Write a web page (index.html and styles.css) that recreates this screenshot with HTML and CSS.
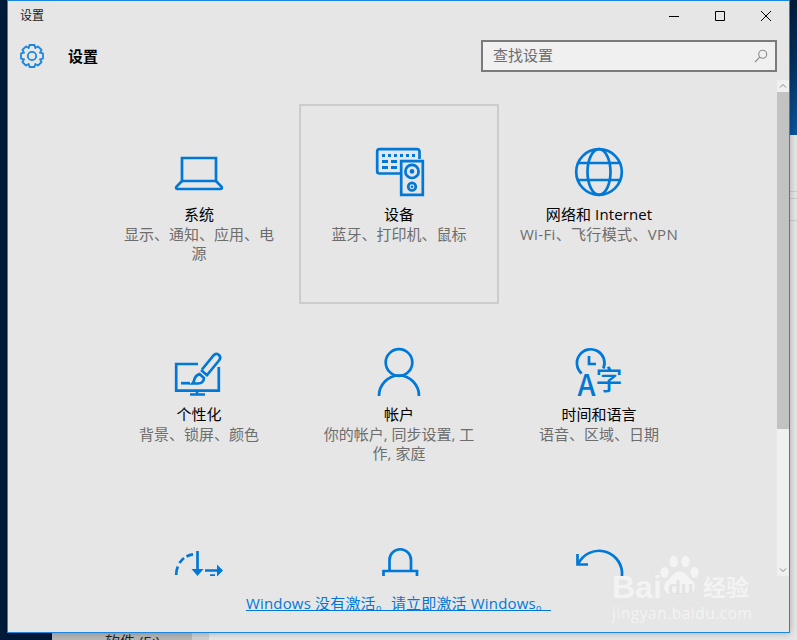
FILE: index.html
```html
<!DOCTYPE html>
<html lang="zh-CN">
<head>
<meta charset="utf-8">
<title>设置</title>
<link rel="stylesheet" href="styles.css">
</head>
<body>
<div class="desktop">
  <div class="edge-left"></div>
  <main class="window">
    <div class="titlebar">
      <span class="title">设置</span>
      <div class="controls">
        <svg class="ctl" viewBox="0 0 46 30"><path d="M18 15.5H28"/></svg>
        <svg class="ctl" viewBox="0 0 46 30"><path d="M18.5 10.5H27.5V19.5H18.5Z"/></svg>
        <svg class="ctl" viewBox="0 0 46 30"><path d="M18 10L28 20M28 10L18 20"/></svg>
      </div>
    </div>
    <header class="head">
      <div class="head-left">
        <svg class="gear" viewBox="0 0 24 24"><path d="M14.54 1L15.29 4.05L17.99 2.42L21.58 6.01L19.95 8.71L23 9.46V14.54L19.95 15.29L21.58 17.99L17.99 21.58L15.29 19.95L14.54 23H9.46L8.71 19.95L6.01 21.58L2.42 17.99L4.05 15.29L1 14.54V9.46L4.05 8.71L2.42 6.01L6.01 2.42L8.71 4.05L9.46 1Z"/><circle cx="12" cy="12" r="4.2"/></svg>
        <h1 class="head-title">设置</h1>
      </div>
      <div class="search">
        <span class="search-text">查找设置</span>
        <svg class="search-icon" viewBox="0 0 14 14"><circle cx="8.7" cy="5.3" r="4"/><path d="M5.8 8.2L1 13"/></svg>
      </div>
    </header>
    <div class="body">
      <div class="scroller">
        <div class="grid">
          <div class="cell">
            <svg class="ico" viewBox="0 0 48 48"><path d="M7 10H41V33H7Z"/><path d="M7 33L1.6 38.5Q0 41 3 41H45Q48 41 46.4 38.5L41 33"/></svg>
            <div class="name">系统</div>
            <div class="desc">显示、通知、应用、电源</div>
          </div>
          <div class="cell cell-on">
            <svg class="ico" viewBox="-1 0 48 48"><path d="M43.5 11V3.5Q43.5 1.2 41 1.2H3.5Q1.2 1.2 1.2 3.5V23Q1.2 25.5 3.5 25.5H24"/><path d="M25.2 13.2H46.8V46.8H25.2Z"/><circle cx="36" cy="23.4" r="6.6"/><circle cx="36" cy="38.7" r="3.8"/><path class="solid" d="M6 6h3v3h-3zM12 6h3v3h-3zM18 6h3v3h-3zM24 6h3v3h-3zM30 6h3v3h-3zM36 6h3v3h-3zM6 12h6v3h-6zM15 12h6v3h-6zM6 18h6v3h-6zM15 18h6v3h-6z"/><circle class="solid" cx="36" cy="23.4" r="2.3"/><circle class="solid" cx="36" cy="38.7" r="1.3"/></svg>
            <div class="name">设备</div>
            <div class="desc">蓝牙、打印机、鼠标</div>
          </div>
          <div class="cell">
            <svg class="ico" viewBox="0 0 48 48"><circle cx="24" cy="24" r="22.8"/><ellipse cx="24" cy="24" rx="11.5" ry="22.8"/><path d="M3 15H45M3 32H45"/></svg>
            <div class="name name-latin">网络和 Internet</div>
            <div class="desc desc-latin">Wi-Fi、飞行模式、VPN</div>
          </div>
          <div class="cell">
            <svg class="ico" viewBox="0 0 48 48"><path d="M23 16H1.2V42.7H43.8V19"/><path d="M22 43V46.5M15 46.5H30"/><path d="M6 35.2H15"/><path d="M27 21.5L38.5 7.5Q41.5 4.5 44 7Q46.5 9.5 44 12.5L32.5 26.5"/><path d="M26 22L33 28"/><path d="M24.5 26L29 30Q28.5 35.5 23 35.5H17.5Q19 34 19.5 31Q20.5 27.5 24.5 26Z"/></svg>
            <div class="name">个性化</div>
            <div class="desc">背景、锁屏、颜色</div>
          </div>
          <div class="cell">
            <svg class="ico" viewBox="0 0 48 48"><circle cx="24" cy="14.5" r="13.3"/><path d="M4 48A20 20.5 0 0 1 44 48"/></svg>
            <div class="name">帐户</div>
            <div class="desc">你的帐户, 同步设置, 工作, 家庭</div>
          </div>
          <div class="cell">
            <svg class="ico" viewBox="0 0 48 48"><path d="M6.7 25.5A13.8 13.8 0 1 1 28.4 20.5"/><path d="M14 8V16H21"/><text class="ico-a" x="2.5" y="48">A</text><text class="ico-zi" x="20.5" y="41.5">字</text></svg>
            <div class="name">时间和语言</div>
            <div class="desc">语音、区域、日期</div>
          </div>
          <div class="cell">
            <svg class="ico" viewBox="0 0 48 48"><path d="M1.2 27A20 20 0 0 1 2.8 18.5M4.5 15A20 20 0 0 1 9 10M11.5 8.5A20 20 0 0 1 18 6.3"/><path d="M22.5 3V24"/><path class="solid" d="M16.5 21H28.5L22.5 28Z"/><path d="M30 22.5H43M35 27.5H40"/><path class="solid" d="M42 16.5L48 22.5L42 28.5Z"/></svg>
          </div>
          <div class="cell">
            <svg class="ico" viewBox="0 0 48 48"><path d="M14.5 23V12A10.7 10.7 0 0 1 36 12V23"/><path d="M8.5 30V23H42V30"/></svg>
          </div>
          <div class="cell">
            <svg class="ico" viewBox="0 0 48 48"><path d="M2.5 6V16.5H13"/><path d="M3.5 15.5A23 23 0 0 1 47 24V32"/></svg>
          </div>
        </div>
      </div>
      <div class="scrollbar">
        <svg class="arrow" viewBox="0 0 12 12"><path d="M3 7.5L6 4.5L9 7.5"/></svg>
        <div class="track"><div class="thumb"></div></div>
        <svg class="arrow" viewBox="0 0 12 12"><path d="M3 4.5L6 7.5L9 4.5"/></svg>
      </div>
    </div>
    <footer class="foot"><a class="link" href="#">Windows 没有激活。请立即激活 Windows。</a></footer>
    <div class="mark">
      <span class="mark-bai">Bai</span>
      <svg class="mark-paw" viewBox="0 0 44 46"><ellipse cx="15" cy="7" rx="4.5" ry="6.5"/><ellipse cx="28" cy="7" rx="4.5" ry="6.5"/><ellipse cx="5" cy="19" rx="4.5" ry="6"/><ellipse cx="38" cy="19" rx="4.5" ry="6"/><path d="M21.5 18C28 18 30 24 35 28C41 33 38 44 30 43C26 42.5 24 41.5 21.5 41.5C18 41.5 16 43 12 43C4 43 2 33 8 28C13 24 15 18 21.5 18Z"/></svg>
      <span class="mark-du">du</span>
      <span class="mark-cn">经验</span>
      <span class="mark-url">jingyan.baidu.com</span>
    </div>
  </main>
  <div class="edge-right"></div>
  <div class="under"><span class="under-text">软件 (E:)</span></div>
</div>
</body>
</html>
```

FILE: styles.css
```css
* { box-sizing: border-box; }
html, body { margin: 0; height: 640px; overflow: hidden; }
body { font-family: "Open Sans", "Noto Sans CJK SC", "Liberation Sans", sans-serif; }
.desktop {
  position: relative;
  width: 797px;
  height: 640px;
  display: flex;
  align-items: flex-start;
  background: linear-gradient(90deg, #00193a 52px, #e6e6e6 52px);
  overflow: hidden;
}
.edge-left { width: 7px; height: 633px; background: #001b3a; flex: none; }
.edge-right {
  width: 7px;
  height: 640px;
  flex: none;
  background: linear-gradient(#001c3d 0, #03305e 60px, #0a55a0 135px, #e6e6e6 135px, #e6e6e6 191px, #cfcfcf 191px, #cfcfcf 192px, #e6e6e6 192px, #e6e6e6 198px, #cfcfcf 198px, #cfcfcf 199px, #e6e6e6 199px, #e6e6e6 220px, #cfcfcf 220px, #cfcfcf 221px, #e6e6e6 221px);
}
.window {
  position: relative;
  z-index: 1;
  width: 783px;
  height: 633px;
  flex: none;
  display: flex;
  flex-direction: column;
  background: #e6e6e6;
  border: 1px solid #1b86dd;
  box-shadow: 0 0 7px rgba(0,0,0,.28);
  color: #000;
}
.titlebar { height: 30px; flex: none; display: flex; justify-content: space-between; align-items: center; }
.title { margin: -2px 0 0 12px; font-size: 12px; color: #1a1a1a; }
.controls { display: flex; }
.ctl { width: 46px; height: 30px; display: block; fill: none; stroke: #000; stroke-width: 1; }
.head { height: 49px; flex: none; display: flex; justify-content: space-between; align-items: flex-start; padding: 9px 12px 0 12px; }
.head-left { display: flex; align-items: center; height: 32px; gap: 24px; }
.gear { width: 24px; height: 24px; fill: none; stroke: #1b86dd; stroke-width: 1.8; stroke-linejoin: round; }
.head-title { margin: 0; font-size: 15px; font-weight: 700; line-height: 20px; }
.search {
  width: 296px;
  height: 32px;
  display: flex;
  justify-content: space-between;
  align-items: center;
  padding: 0 7px 0 10px;
  background: #f0f0f0;
  border: 2px solid #7a7a7a;
}
.search-text { margin-top: -3px; font-size: 15px; color: #6d6d6d; }
.search-icon { width: 14px; height: 14px; fill: none; stroke: #8a8a8a; stroke-width: 1.1; }
.body { height: 496px; flex: none; display: flex; }
.scroller { flex: 1; height: 496px; overflow: hidden; padding: 24px 0 0 91px; }
.grid { display: grid; grid-template-columns: repeat(3, 200px); grid-auto-rows: 200px; }
.cell {
  display: flex;
  flex-direction: column;
  align-items: center;
  padding: 42px 18px 0;
  border: 2px solid transparent;
  text-align: center;
}
.cell-on { border-color: #cccccc; }
.ico { width: 48px; height: 48px; flex: none; fill: none; stroke: #0078d7; stroke-width: 2.7; overflow: visible; }
.ico .solid { fill: #0078d7; stroke: none; }
.ico-a, .ico-zi { fill: #0078d7; stroke: none; font-family: "Noto Sans CJK SC", sans-serif; font-weight: 500; }
.ico-a { font-size: 29px; }
.ico-zi { font-size: 27px; }
.name { margin-top: 8px; font-size: 15px; line-height: 20px; color: #000; white-space: nowrap; }
.name-latin { letter-spacing: .1px; }
.desc { margin-top: 1px; font-size: 15px; line-height: 19px; color: #6d6d6d; }
.desc-latin { letter-spacing: .35px; }
.scrollbar { width: 12px; height: 496px; flex: none; display: flex; flex-direction: column; background: #f0f0f0; }
.arrow { width: 12px; height: 12px; flex: none; fill: none; stroke: #8a8a8a; stroke-width: 1; }
.track { flex: 1; }
.thumb { height: 337px; background: #c2c2c2; }
.foot { flex: 1; display: flex; justify-content: center; padding: 17px 0 0 0; }
.link { font-size: 15px; line-height: 20px; color: #0078d7; letter-spacing: .17px; text-decoration: underline; }
.mark { position: absolute; left: 602px; top: 552px; width: 160px; height: 76px; color: rgba(255,255,255,.55); }
.mark-bai { position: absolute; left: 2px; top: 16px; font: 700 32px/36px "Liberation Sans", sans-serif; }
.mark-paw { position: absolute; left: 50px; top: 2px; width: 40px; height: 42px; fill: rgba(255,255,255,.55); }
.mark-du { position: absolute; left: 58px; top: 24px; font: 700 21px/22px "Liberation Sans", sans-serif; color: #e3e3e3; }
.mark-cn { position: absolute; left: 93px; top: 19px; font-size: 23px; line-height: 30px; font-weight: 700; }
.mark-url { position: absolute; left: 2px; top: 50px; font-size: 15.5px; line-height: 20px; letter-spacing: .5px; white-space: nowrap; }
.under {
  position: absolute;
  left: 52px;
  top: 633px;
  width: 157px;
  height: 7px;
  background: linear-gradient(90deg, #b6b6b6 140px, #d0d0d0 140px);
  overflow: hidden;
}
.under-text { display: block; margin: -2px 0 0 53px; font-size: 15px; line-height: 20px; color: #222; }
```
